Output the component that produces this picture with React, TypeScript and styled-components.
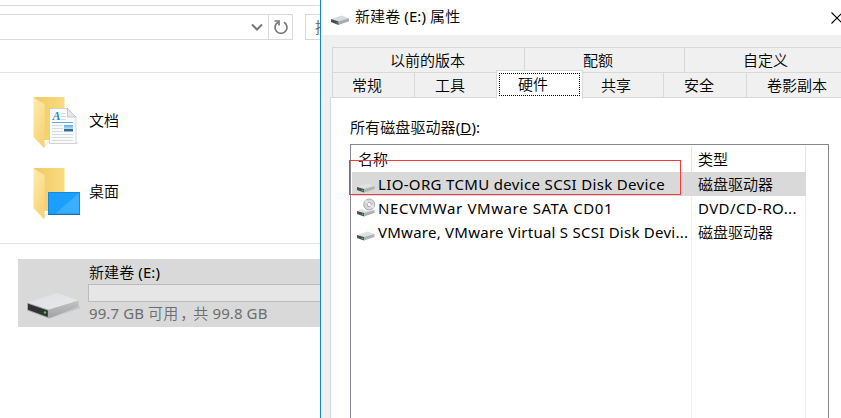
import React from "react";
import styled, { createGlobalStyle } from "styled-components";

const GlobalStyle = createGlobalStyle`
  * { box-sizing: border-box; }
  body { margin: 0; background: #fff; overflow: hidden; }
`;

const Screen = styled.div`
  display: grid;
  grid-template-columns: 320px 521px;
  width: 841px;
  height: 418px;
  overflow: hidden;
  background: #fff;
  color: #000;
  font: 350 15px/20px "Noto Sans CJK SC DemiLight", "Noto Sans CJK SC", sans-serif;
  white-space: nowrap;
`;

const Label = styled.span<{ $spacing?: number; $color?: string }>`
  font-family: "Noto Sans", "Noto Sans CJK SC", sans-serif;
  font-weight: 400;
  letter-spacing: ${(p) => p.$spacing ?? 0}px;
  color: ${(p) => p.$color ?? "#000"};
`;

const Han = styled.span`
  font-family: "Noto Sans CJK SC DemiLight", "Noto Sans CJK SC", sans-serif;
  font-weight: 350;
  line-height: 1;
`;

/* ---------- Explorer window ---------- */

const Explorer = styled.section`
  display: flex;
  flex-direction: column;
  overflow: hidden;
`;

const TopEdge = styled.div`
  height: 6px;
  border-bottom: 1px solid #d9d9d9;
  flex: none;
`;

const AddressBar = styled.div`
  display: flex;
  height: 67px;
  padding-top: 8px;
  border-bottom: 1px solid #e3e3e3;
  flex: none;
`;

const AddressBox = styled.div`
  display: flex;
  width: 293px;
  height: 26px;
  border: 1px solid #d9d9d9;
  border-left: 0;
  flex: none;
`;

const AddressPath = styled.div`
  display: flex;
  align-items: center;
  justify-content: flex-end;
  width: 268px;
  padding-right: 4px;
`;

const RefreshButton = styled.div`
  display: flex;
  align-items: center;
  justify-content: center;
  flex: 1;
  border-left: 1px solid #d9d9d9;
`;

const SearchBox = styled.div`
  width: 60px;
  height: 26px;
  margin-left: 12px;
  padding: 2px 0 0 9px;
  border: 1px solid #d9d9d9;
  flex: none;
`;

const FolderList = styled.div`
  display: flex;
  flex-direction: column;
  gap: 1px;
  height: 171px;
  padding: 13px 0 0 30px;
  border-bottom: 1px solid #e3e3e3;
  flex: none;
`;

const FolderItem = styled.div`
  display: flex;
  height: 70px;
  padding-top: 9px;
`;

const FolderName = styled.div`
  padding: 15px 0 0 5px;
`;

const DriveTile = styled.div`
  display: flex;
  width: 302px;
  height: 68px;
  margin: 15px 0 0 18px;
  background: #d9d9d9;
  flex: none;
`;

const DriveIconSlot = styled.div`
  width: 70px;
  padding: 31px 0 0 7px;
`;

const DriveDetails = styled.div`
  display: flex;
  flex-direction: column;
  flex: 1;
  padding-top: 3px;
`;

const DriveText = styled.div`
  height: 20px;
  padding-left: 1px;
`;

const Comma = styled.span`
  padding-left: 2px;
  margin-right: -2px;
`;

const CapacityBar = styled.div`
  height: 18px;
  margin: 2px 0 1px;
  border: 1px solid #bcbcbc;
  border-right: 0;
  background: #e6e6e6;
`;

/* ---------- Properties dialog ---------- */

const Dialog = styled.section`
  display: flex;
  flex-direction: column;
  overflow: hidden;
  border-left: 1px solid #1883d7;
  background: #f0f0f0;
`;

const TitleBar = styled.header`
  display: flex;
  height: 35px;
  padding-left: 10px;
  background: #fff;
  flex: none;
`;

const TitleIcon = styled.div`
  width: 24px;
  padding-top: 14px;
`;

const TitleText = styled.div`
  flex: 1;
  padding-top: 6px;
`;

const CloseButton = styled.div`
  width: 11px;
  padding-top: 9px;
  overflow: hidden;
`;

const TabRows = styled.nav`
  display: flex;
  flex-direction: column;
  margin: 12px 0 0 11px;
  border-left: 1px solid #d9d9d9;
  flex: none;
`;

const TabRow = styled.div`
  display: flex;
  height: 25px;
`;

const Tab = styled.div<{ $width: number; $pad: number }>`
  width: ${(p) => p.$width}px;
  height: 25px;
  padding: 2px 0 0 ${(p) => p.$pad}px;
  border-top: 1px solid #d9d9d9;
  border-right: 1px solid #d9d9d9;
  flex: none;
`;

const ActiveTab = styled.div`
  width: 87px;
  height: 29px;
  margin: -2px -1px 0 -1px;
  padding: 2px;
  border: 1px solid #d9d9d9;
  border-bottom: 0;
  background: #fff;
  flex: none;
  z-index: 1;
`;

const FocusFrame = styled.div`
  width: 81px;
  height: 23px;
  border: 1px dotted #000;
  padding: 0 0 0 18px;
`;

const Page = styled.div`
  flex: 1;
  margin-left: 9px;
  padding: 19px 0 0 19px;
  border: 1px solid #d9d9d9;
  border-right: 0;
  border-bottom: 0;
  background: #fff;
`;

const ListCaption = styled.div`
  height: 20px;
`;

const DeviceTable = styled.div`
  position: relative;
  display: grid;
  grid-template-columns: 340px 114px;
  width: 479px;
  height: 290px;
  margin-top: 7px;
  padding: 1px 0 0 1px;
  border: 1px solid #828790;
`;

const Column = styled.div`
  background: linear-gradient(#e5e5e5 26px, #e5f1fb 26px) right top / 1px 100% no-repeat;
`;

const HeaderCell = styled.div`
  height: 26px;
  padding: 3px 0 0 6px;
`;

const Cell = styled.div<{ $selected?: boolean }>`
  display: flex;
  height: 24px;
  padding: 2px 0 0 6px;
  background: ${(p) => (p.$selected ? "#d9d9d9" : "transparent")};
`;

const DeviceIcon = styled.div`
  width: 21px;
  margin-left: -1px;
  flex: none;
`;

const Highlight = styled.div`
  position: absolute;
  left: -2px;
  top: 15px;
  width: 332px;
  height: 35px;
  border: 1px solid #f23b3f;
`;

/* ---------- Drawings ---------- */

const FolderIcon = ({ kind }: { kind: "documents" | "desktop" }) => (
  <svg width="54" height="56" viewBox="30 95 54 56">
    <defs>
      <linearGradient id="folderBack" x1="0" y1="0" x2="1" y2="0">
        <stop offset="0" stopColor="#f0c965" />
        <stop offset="1" stopColor="#fadb80" />
      </linearGradient>
      <linearGradient id="folderFlap" x1="0" y1="0" x2="0.5" y2="1">
        <stop offset="0" stopColor="#ffeab0" />
        <stop offset="1" stopColor="#f8d477" />
      </linearGradient>
      <linearGradient id="photo" x1="0" y1="0" x2="0" y2="1">
        <stop offset="0" stopColor="#5da8e4" />
        <stop offset="0.55" stopColor="#b5dcf2" />
        <stop offset="0.65" stopColor="#34687f" />
        <stop offset="1" stopColor="#2877ad" />
      </linearGradient>
    </defs>
    <path d="M42 147l5-6 3 0-6 7z" fill="#eee" />
    <path d="M34 97h30.500v43H44z" fill="url(#folderBack)" />
    <path d="M33.500 97.500L44.700 104v43.500h-1.200L33.500 137z" fill="url(#folderFlap)" />
    {kind === "documents" ? (
      <g>
        <path d="M76 142.500l3 0-2 1.500H50v-1z" fill="#ddd" />
        <path d="M49.500 108.500h18l8.500 8.500v26.500H49.500z" fill="#f9fafb" stroke="#c9cccf" strokeWidth=".8" />
        <path d="M67.500 108.500v8.500h8.500z" fill="#e5e8eb" stroke="#b6babd" strokeWidth=".7" />
        <text x="52.500" y="120" fontSize="12" fontStyle="italic" fontWeight="700" fill="#2587cd" fontFamily="Liberation Serif, serif">A</text>
        <path d="M61 113.500h5M61 116.500h5M61 119.500h5M52 125.500h11M52 128.500h11M52 131.500h11M52 134.500h21M52 137.500h21M52 140.500h21" stroke="#d0d4d7" strokeWidth=".8" />
        <path d="M52 122.500h21" stroke="#5aafe2" />
        <rect x="64" y="125" width="9" height="6.500" fill="url(#photo)" />
      </g>
    ) : (
      <g>
        <path d="M48 121h32v22H48z" fill="#1a9ffc" />
        <path d="M80 121v22H55z" fill="#3aaeff" />
        <path d="M48.500 121.500h31v21.500h-31z" fill="none" stroke="#1688dc" />
        <path d="M48 143.500h32" stroke="#1678b9" />
      </g>
    )}
  </svg>
);

const LargeDrive = () => (
  <svg width="56" height="31" viewBox="25 290 56 31">
    <defs>
      <linearGradient id="driveTop" x1="0" y1="0" x2="1" y2="1">
        <stop offset="0" stopColor="#dedfe2" />
        <stop offset="1" stopColor="#e9eaed" />
      </linearGradient>
      <linearGradient id="driveSide" x1="0" y1="0" x2="0" y2="1">
        <stop offset="0" stopColor="#c2c3c5" />
        <stop offset="1" stopColor="#9fa1a3" />
      </linearGradient>
    </defs>
    <path d="M49 318.500L81 308l-5-4z" fill="#c7c7c8" />
    <path d="M27 302.500L57 293l21.500 7.500L49 311z" fill="url(#driveTop)" />
    <path d="M49 309.500l29.500-9v6L49 318.500z" fill="url(#driveSide)" />
    <path d="M27 302.500l22 7.200v8.800l-22-8z" fill="#a8aaac" />
    <path d="M28 303.700l19.800 6.800v6.500L28 309.800z" fill="#303234" />
    <circle cx="45" cy="312.500" r="1.200" fill="#2fe332" />
  </svg>
);

const SmallDrive = ({ disc = false }: { disc?: boolean }) => (
  <svg width="20" height="20" viewBox="0 0 20 20" display="block">
    {disc && (
      <g>
        <circle cx="12.200" cy="6.500" r="5.500" fill="#d6d8da" stroke="#9a9da0" strokeWidth=".8" />
        <circle cx="12.200" cy="6.500" r="2" fill="#fff" stroke="#9da0a2" />
        <path d="M12.200 6.500L8 2.500m4.200 4l4.800 3" stroke="#fff" strokeWidth="1.500" opacity=".55" />
      </g>
    )}
    <path
      d={disc ? "M0 13L5 11l3 1.500h6l3.500-1V12L7 15.500z" : "M0 13L10.500 9.500l7 2.500L7 15.500z"}
      fill="#e0e1e3"
    />
    <path d="M7 15l10.500-3v3L7 18.600z" fill="#b0b2b4" />
    <path d="M0 13l7 2v3.600L0 16z" fill="#4a4d4d" />
    <circle cx="5.500" cy="16.400" r=".8" fill="#35c64b" />
  </svg>
);

const TitleDrive = () => (
  <svg width="20" height="12" viewBox="0 7 20 12" display="block">
    <path d="M0 12L10.500 8.500l7.500 2.800L7.500 15z" fill="#d9dadd" />
    <path d="M7.500 14.500l10.500-3.200v3L7.500 18z" fill="#a8aaad" />
    <path d="M0 12l7.500 2.500V18L0 15z" fill="#454848" />
    <circle cx="6" cy="15.800" r=".8" fill="#39b64b" />
  </svg>
);

const DEVICES = [
  { name: "LIO-ORG TCMU device SCSI Disk Device", spacing: 0.34, disc: false },
  { name: "NECVMWar VMware SATA CD01", spacing: 0.6, disc: true },
  { name: "VMware, VMware Virtual S SCSI Disk Devi...", spacing: 0.25, disc: false },
];

export default function App() {
  return (
    <>
      <GlobalStyle />
      <Screen>
        <Explorer>
          <TopEdge />
          <AddressBar>
            <AddressBox>
              <AddressPath>
                <svg width="14" height="10" viewBox="0 0 14 10">
                  <path d="M2 2.500l5 5 5-5" fill="none" stroke="#777" strokeWidth="2" />
                </svg>
              </AddressPath>
              <RefreshButton>
                <svg width="16" height="16" viewBox="0 0 16 16" fill="none" stroke="#777" strokeWidth="1.700">
                  <path d="M11 3.200A6 6 0 1 1 5 3.200" />
                  <path d="M1.500 2h4.500v4.500" />
                </svg>
              </RefreshButton>
            </AddressBox>
            <SearchBox><Label $color="#6d6d6d">搜</Label></SearchBox>
          </AddressBar>
          <FolderList>
            <FolderItem>
              <FolderIcon kind="documents" />
              <FolderName>文档</FolderName>
            </FolderItem>
            <FolderItem>
              <FolderIcon kind="desktop" />
              <FolderName>桌面</FolderName>
            </FolderItem>
          </FolderList>
          <DriveTile>
            <DriveIconSlot><LargeDrive /></DriveIconSlot>
            <DriveDetails>
              <DriveText><Label $spacing={0.1}><Han>新建卷</Han> (E:)</Label></DriveText>
              <CapacityBar />
              <DriveText>
                <Label $color="#6d6d6d" $spacing={0.1}>
                  99.7 GB <Han>可用<Comma>，</Comma>共</Han> 99.8 GB
                </Label>
              </DriveText>
            </DriveDetails>
          </DriveTile>
        </Explorer>

        <Dialog>
          <TitleBar>
            <TitleIcon><TitleDrive /></TitleIcon>
            <TitleText><Label $spacing={0.1}><Han>新建卷</Han> (E:) <Han>属性</Han></Label></TitleText>
            <CloseButton>
              <svg width="14" height="14" viewBox="0 0 14 14">
                <path d="M1.500 1.500l11 11m0-11l-11 11" stroke="#000" strokeWidth="1.100" />
              </svg>
            </CloseButton>
          </TitleBar>
          <TabRows>
            <TabRow>
              <Tab $width={192} $pad={57}>以前的版本</Tab>
              <Tab $width={160} $pad={58}>配额</Tab>
              <Tab $width={170} $pad={58}>自定义</Tab>
            </TabRow>
            <TabRow>
              <Tab $width={82} $pad={19}>常规</Tab>
              <Tab $width={82} $pad={20}>工具</Tab>
              <ActiveTab><FocusFrame>硬件</FocusFrame></ActiveTab>
              <Tab $width={82} $pad={19}>共享</Tab>
              <Tab $width={83} $pad={20}>安全</Tab>
              <Tab $width={110} $pad={20}>卷影副本</Tab>
            </TabRow>
          </TabRows>
          <Page>
            <ListCaption>
              <Label $spacing={0.1}><Han>所有磁盘驱动器</Han>(<u>D</u>):</Label>
            </ListCaption>
            <DeviceTable>
              <Column>
                <HeaderCell>名称</HeaderCell>
                {DEVICES.map((d, i) => (
                  <Cell key={d.name} $selected={i === 0}>
                    <DeviceIcon><SmallDrive disc={d.disc} /></DeviceIcon>
                    <Label $spacing={d.spacing}>{d.name}</Label>
                  </Cell>
                ))}
              </Column>
              <Column>
                <HeaderCell>类型</HeaderCell>
                <Cell $selected>磁盘驱动器</Cell>
                <Cell><Label $spacing={0.4}>DVD/CD-RO...</Label></Cell>
                <Cell>磁盘驱动器</Cell>
              </Column>
              <Highlight />
            </DeviceTable>
          </Page>
        </Dialog>
      </Screen>
    </>
  );
}
